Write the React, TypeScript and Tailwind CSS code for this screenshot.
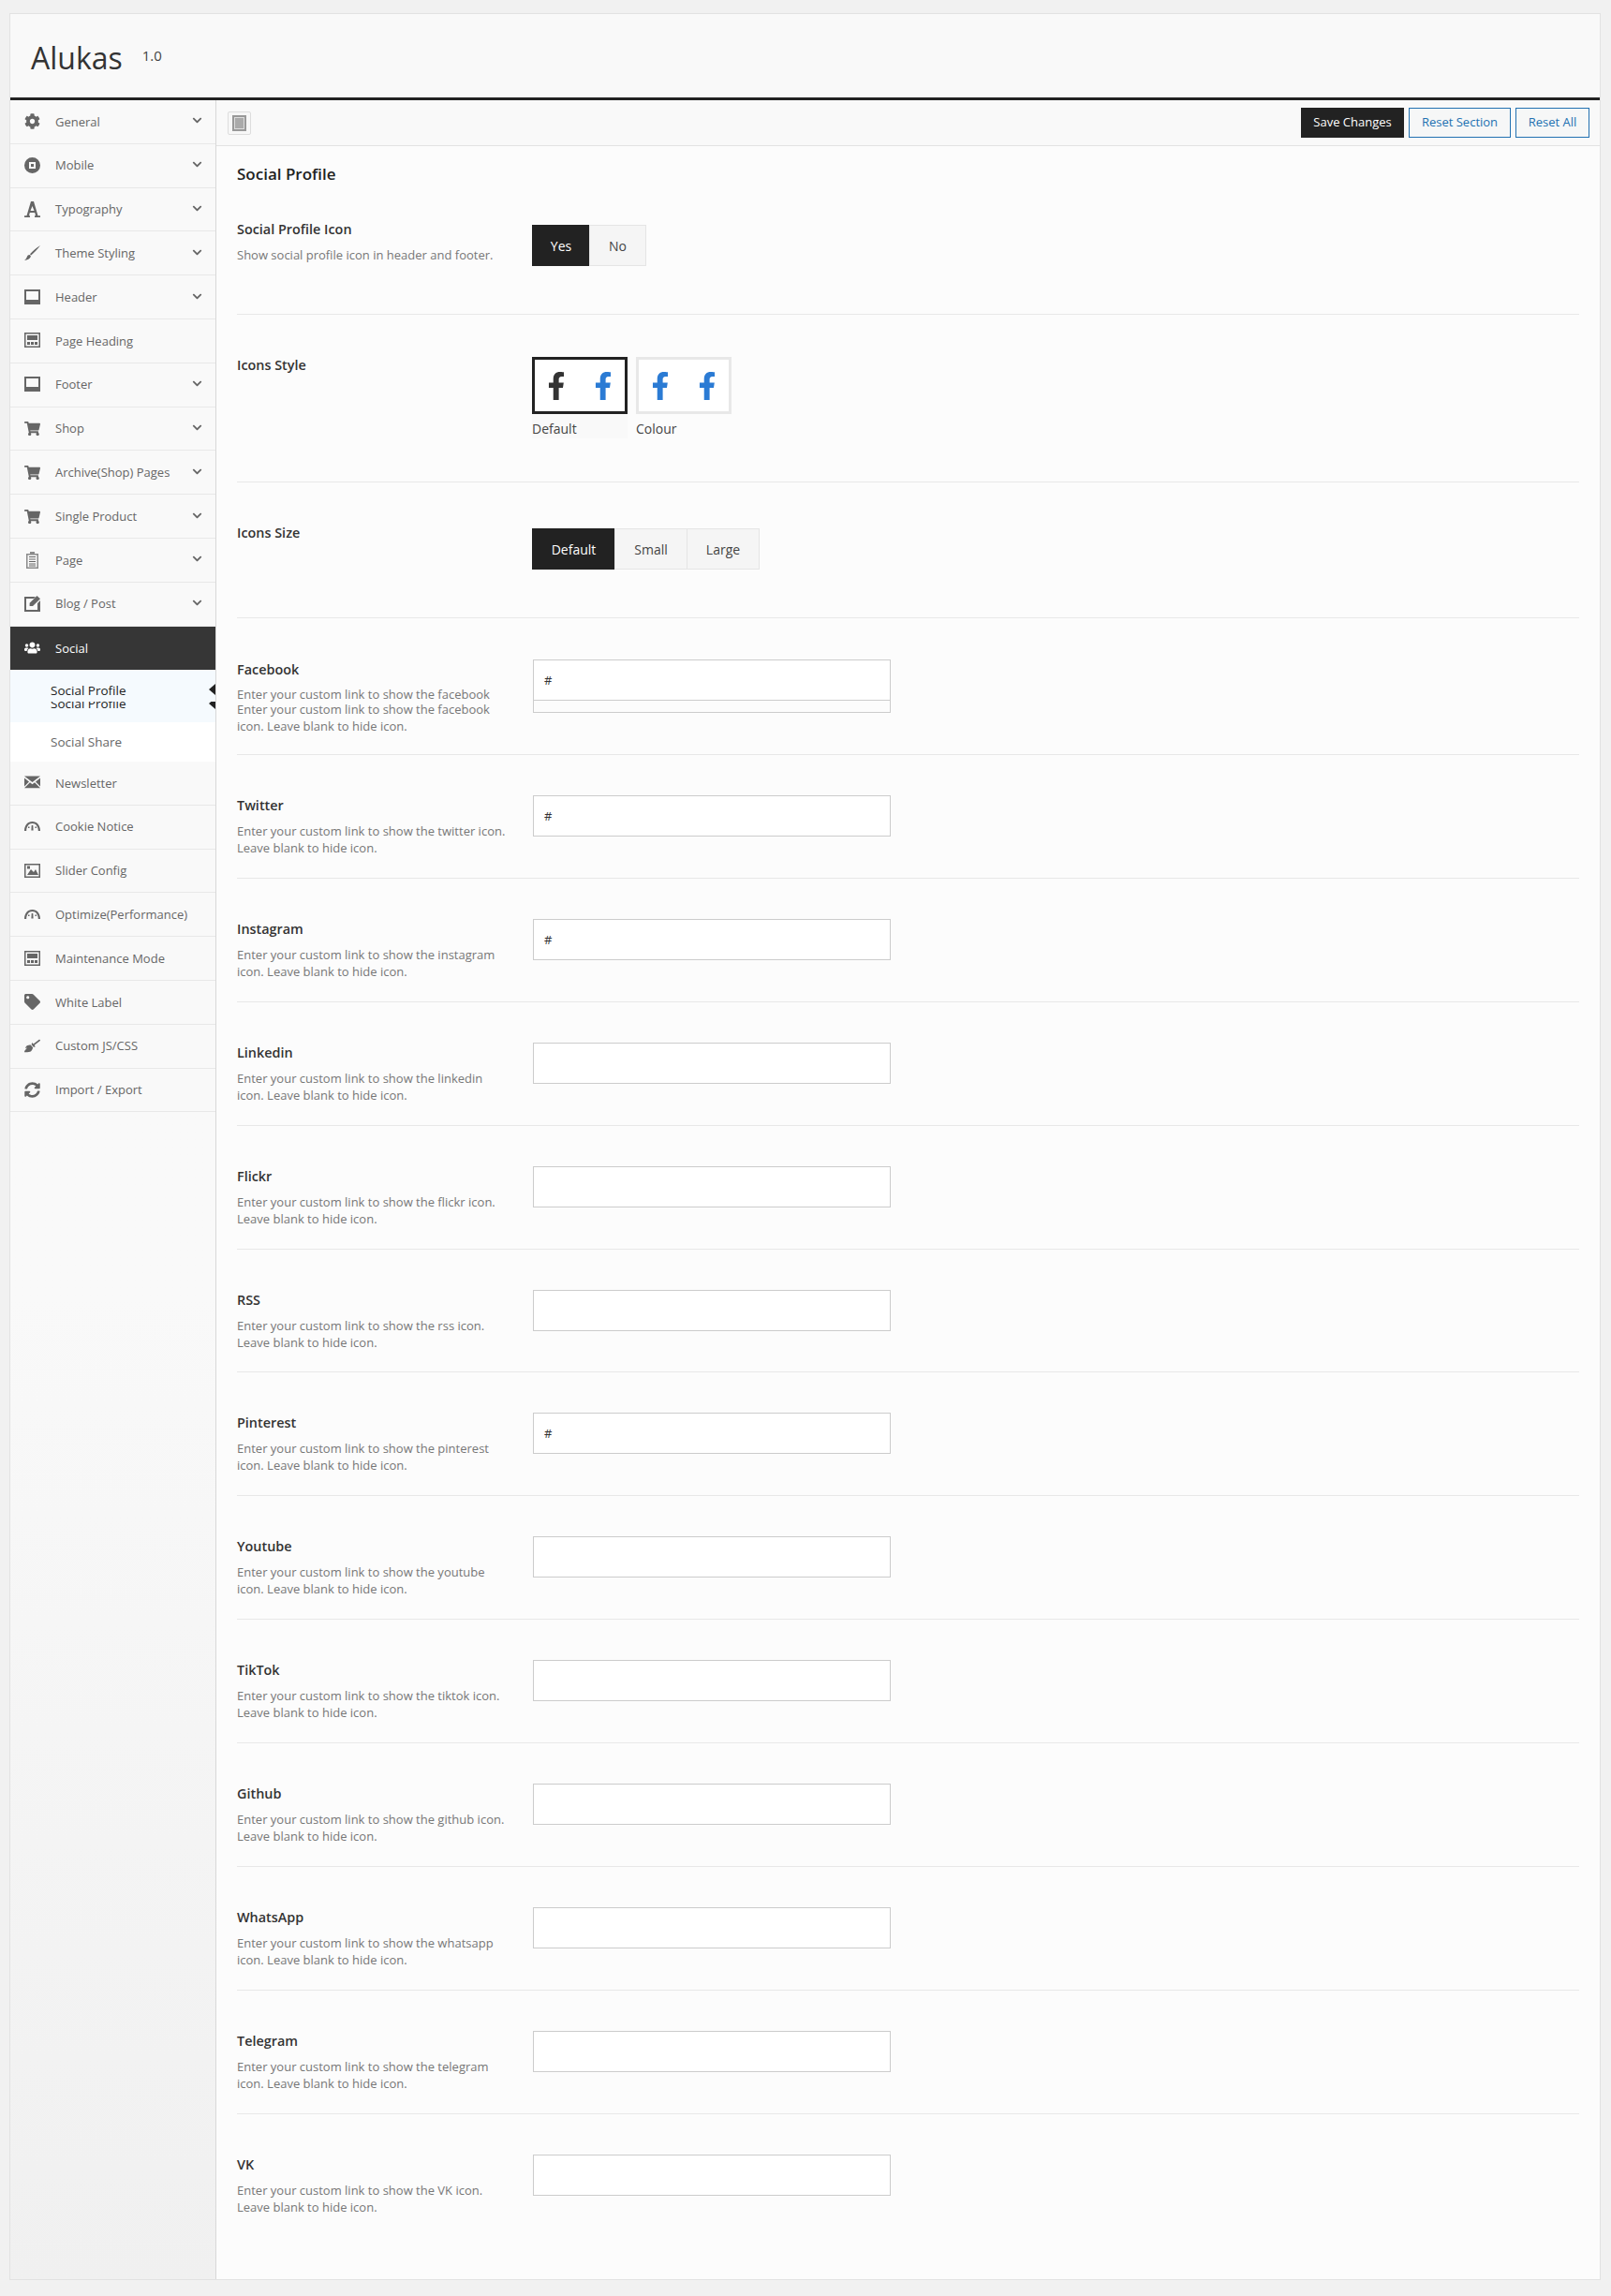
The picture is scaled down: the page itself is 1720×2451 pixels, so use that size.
import type { ReactNode } from 'react';
import {
    FaBroom,
    FaChevronDown,
    FaCog,
    FaFacebookF,
    FaShoppingCart,
    FaSyncAlt,
    FaTag,
    FaUsers,
} from 'react-icons/fa';

const Frame = ({ children }: { children: ReactNode }) => (
    <svg width="17" height="17" viewBox="0 0 17 17" fill="currentColor">
        {children}
    </svg>
);

const BarIcon = () => (
    <Frame>
        <path fillRule="evenodd" d="M0 0h17v16H0zM2 2v9h13V2z" />
    </Frame>
);

const LayoutIcon = () => (
    <Frame>
        <path fillRule="evenodd" d="M0 0h17v16H0zM1.500 1.500v13h14v-13zM3 3h11v5H3zM3 10h3v3H3zM7 10h3v3H7zM11 10h3v3h-3z" />
    </Frame>
);

const GaugeIcon = () => (
    <Frame>
        <path d="M0 13C0 7 3.500 3 8.500 3S17 7 17 13h-2.200C14.800 8.300 12.300 5 8.500 5S2.200 8.300 2.200 13z" />
        <path d="M7.700 7h1.600l.3 5.500H7.400zM4 8.500h1.500v1.500H4zM11.500 8.500H13v1.500h-1.500z" />
    </Frame>
);

const navIcons: Record<string, ReactNode> = {
    cog: <FaCog size={17} />,
    mobile: (
        <Frame>
            <path fillRule="evenodd" d="M8.500 0a8.500 8.500 0 1 1 0 17 8.500 8.500 0 0 1 0-17zM5 5v7h7V5zM7 7h3v3H7z" />
        </Frame>
    ),
    font: (
        <Frame>
            <path fillRule="evenodd" d="M7 0h3l4.500 15.300H17V17h-6v-1.700h1L11.200 12H5.800L5 15.300h1V17H0v-1.700h2.500zM8.500 5L6.500 10h4z" />
        </Frame>
    ),
    brush: (
        <Frame>
            <path d="M17 0C14 4 10.500 8 7.200 10.500L6 9.300C9 6 13 2.500 17 0zM5.300 10c1 0 1.800 1 1.500 2-.6 2.200-3.800 3.600-6.800 4 1.800-1.500 2.400-2.500 2.900-4 .4-1.200 1.300-2 2.400-2z" />
        </Frame>
    ),
    bar: <BarIcon />,
    layout: <LayoutIcon />,
    cart: <FaShoppingCart size={17} />,
    page: (
        <svg width="17" height="18" viewBox="0 0 17 18" fill="none">
            <path fill="currentColor" opacity="0.75" fillRule="evenodd" d="M2 2h4V0h5v2h4v16H2zM3.500 3.500v13h10v-13z" />
            <path stroke="currentColor" strokeWidth="1" d="M5 5.500h7M5 8h7M5 10.500h7M5 13h7M5 15h7" />
        </svg>
    ),
    edit: (
        <Frame>
            <path d="M0 1h12L10 3H2v12h12V8l3-3v12H0z" />
            <path d="M13.500 0L17 3.300 9 11H5.600V7.700z" />
        </Frame>
    ),
    users: <FaUsers size={17} />,
    mail: (
        <Frame>
            <path d="M0 1.500h17L8.500 8zM0 3.500l5 4L0 12.500zM17 3.500v9l-5-5zM6 8.300l2.500 2 2.500-2 6 6H0z" />
        </Frame>
    ),
    gauge: <GaugeIcon />,
    image: (
        <Frame>
            <path fillRule="evenodd" d="M0 1h17v15H0zM1.500 2.500v12h14v-12z" />
            <path d="M3 13l4-6 3 3 2-3 3 6zM3 3.500h3v3H3z" />
        </Frame>
    ),
    tag: <FaTag size={17} />,
    broom: <FaBroom size={17} />,
    sync: <FaSyncAlt size={17} />,
};

const topNav = [
    { label: 'General', icon: 'cog', more: true },
    { label: 'Mobile', icon: 'mobile', more: true },
    { label: 'Typography', icon: 'font', more: true },
    { label: 'Theme Styling', icon: 'brush', more: true },
    { label: 'Header', icon: 'bar', more: true },
    { label: 'Page Heading', icon: 'layout', more: false },
    { label: 'Footer', icon: 'bar', more: true },
    { label: 'Shop', icon: 'cart', more: true },
    { label: 'Archive(Shop) Pages', icon: 'cart', more: true },
    { label: 'Single Product', icon: 'cart', more: true },
    { label: 'Page', icon: 'page', more: true },
    { label: 'Blog / Post', icon: 'edit', more: true },
];

const bottomNav = [
    { label: 'Newsletter', icon: 'mail', more: false },
    { label: 'Cookie Notice', icon: 'gauge', more: false },
    { label: 'Slider Config', icon: 'image', more: false },
    { label: 'Optimize(Performance)', icon: 'gauge', more: false },
    { label: 'Maintenance Mode', icon: 'layout', more: false },
    { label: 'White Label', icon: 'tag', more: false },
    { label: 'Custom JS/CSS', icon: 'broom', more: false },
    { label: 'Import / Export', icon: 'sync', more: false },
];

const links = [
    { name: 'Twitter', first: 'Enter your custom link to show the twitter icon.', second: 'Leave blank to hide icon.', value: '#' },
    { name: 'Instagram', first: 'Enter your custom link to show the instagram', second: 'icon. Leave blank to hide icon.', value: '#' },
    { name: 'Linkedin', first: 'Enter your custom link to show the linkedin', second: 'icon. Leave blank to hide icon.', value: '' },
    { name: 'Flickr', first: 'Enter your custom link to show the flickr icon.', second: 'Leave blank to hide icon.', value: '' },
    { name: 'RSS', first: 'Enter your custom link to show the rss icon.', second: 'Leave blank to hide icon.', value: '' },
    { name: 'Pinterest', first: 'Enter your custom link to show the pinterest', second: 'icon. Leave blank to hide icon.', value: '#' },
    { name: 'Youtube', first: 'Enter your custom link to show the youtube', second: 'icon. Leave blank to hide icon.', value: '' },
    { name: 'TikTok', first: 'Enter your custom link to show the tiktok icon.', second: 'Leave blank to hide icon.', value: '' },
    { name: 'Github', first: 'Enter your custom link to show the github icon.', second: 'Leave blank to hide icon.', value: '' },
    { name: 'WhatsApp', first: 'Enter your custom link to show the whatsapp', second: 'icon. Leave blank to hide icon.', value: '' },
    { name: 'Telegram', first: 'Enter your custom link to show the telegram', second: 'icon. Leave blank to hide icon.', value: '' },
    { name: 'VK', first: 'Enter your custom link to show the VK icon.', second: 'Leave blank to hide icon.', value: '' },
];

const NavItem = ({ label, icon, more }: { label: string; icon: string; more: boolean }) => (
    <div className="flex h-[46.8px] items-center border-b border-[#e8e8e8] bg-[#f9f9f9] pl-[15px] pr-[14px] text-[#666]">
        <span className="flex w-[33px] shrink-0 justify-start">{navIcons[icon]}</span>
        <span className="mt-px flex-1 whitespace-nowrap text-[13px]">{label}</span>
        {more && <FaChevronDown size={11} className="-mt-0.5" />}
    </div>
);

const Segmented = ({ options, widths }: { options: string[]; widths: string[] }) => (
    <div className="flex h-[44px]">
        {options.map((option, index) => (
            <div
                key={option}
                className={
                    index === 0
                        ? `flex items-center justify-center bg-[#222] text-[14px] text-white ${widths[index]}`
                        : `-ml-px flex items-center justify-center border border-[#e5e5e5] bg-[#f5f5f5] text-[14px] text-[#444] ${widths[index]}`
                }
            >
                {option}
            </div>
        ))}
    </div>
);

const StyleOption = ({ label, selected }: { label: string; selected: boolean }) => (
    <div className="w-[102px]">
        <div
            className={`flex h-[61px] items-center justify-between border-[3px] bg-white px-[8px] ${
                selected ? 'border-[#222]' : 'border-[#e8e8e8]'
            }`}
        >
            <FaFacebookF size={30} className={selected ? 'text-[#333]' : 'text-[#2b7bd4]'} />
            <FaFacebookF size={30} className="text-[#2b7bd4]" />
        </div>
        <div className={`h-[26px] pt-[7px] text-[14px] leading-[18px] text-[#444] ${selected ? 'bg-[#f9f9f9]' : ''}`}>{label}</div>
    </div>
);

const TextField = ({ value }: { value: string }) => (
    <input
        type="text"
        defaultValue={value}
        className="relative h-[44px] w-[382px] border border-[#ccc] bg-white px-[11px] text-[13px] text-[#333] outline-none"
    />
);

export default function App() {
    return (
        <div className="min-h-[2451px] bg-[#f1f1f1] pl-[10px] pr-[11px] pt-[14px] font-['Open_Sans','Noto_Sans',sans-serif]">
            <div className="flex h-[2420px] flex-col border border-[#e2e2e2] bg-[#f1f1f1]">
                <header className="flex h-[92px] shrink-0 items-start border-b-[3px] border-[#222] bg-[#f9f9f9] pl-[22px] pt-[22px]">
                    <h1 className="text-[32px] font-medium leading-[50px] text-[#333]">Alukas</h1>
                    <span className="ml-[21px] mt-[12px] text-[15px] leading-[20px] text-[#444]">1.0</span>
                </header>

                <div className="flex min-h-0 flex-1">
                    <aside className="w-[220px] shrink-0 border-r border-[#d8d8d8] bg-linear-to-b from-[#f9f9f9] from-[55%] to-[#f0f0f0]">
                        {topNav.map((item) => (
                            <NavItem key={item.label} {...item} />
                        ))}
                        <div className="flex h-[46.4px] items-center bg-[#363636] pl-[15px] text-white">
                            <span className="flex w-[33px]">{navIcons.users}</span>
                            <span className="mt-px text-[13px]">Social</span>
                        </div>
                        <div className="relative h-[56px] overflow-hidden bg-[#f5fafe] text-[13.5px] font-medium text-[#222]">
                            <div className="absolute left-[43px] top-[27px] leading-[18px]">Social Profile</div>
                            <div className="absolute right-0 top-[30px] h-0 w-0 border-y-[6px] border-r-[7px] border-y-transparent border-r-[#222]" />
                            <div className="absolute inset-x-0 top-0 h-[34px] bg-[#f5fafe]" />
                            <div className="absolute left-[43px] top-[13px] leading-[18px]">Social Profile</div>
                            <div className="absolute right-0 top-[15px] h-0 w-0 border-y-[6px] border-r-[7px] border-y-transparent border-r-[#222]" />
                        </div>
                        <div className="flex h-[42px] items-center bg-white pl-[43px] text-[13.5px] text-[#666]">Social Share</div>
                        {bottomNav.map((item) => (
                            <NavItem key={item.label} {...item} />
                        ))}
                    </aside>

                    <main className="min-w-0 flex-1 bg-[#fcfcfc]">
                        <div className="flex h-[49px] items-center justify-between border-b border-[#e2e2e2] bg-[#f9f9f9] pl-[12px] pr-[11px]">
                            <div className="flex h-[25px] w-[25px] items-center justify-center rounded-[2px] border border-[#ddd] bg-[#f7f7f7]">
                                <div className="flex h-[17px] w-[15px] border-2 border-[#999] bg-[#ddd] p-px">
                                    <div className="flex-1 bg-[#aaa]" />
                                </div>
                            </div>
                            <div className="flex items-center gap-[5px] text-[13px]">
                                <button type="button" className="h-[32px] w-[110px] bg-[#222] text-white">
                                    Save Changes
                                </button>
                                <button type="button" className="h-[32px] w-[109px] border border-[#2271b1] bg-[#f6f7f7] text-[#2271b1]">
                                    Reset Section
                                </button>
                                <button type="button" className="h-[32px] w-[79px] border border-[#2271b1] bg-[#f6f7f7] text-[#2271b1]">
                                    Reset All
                                </button>
                            </div>
                        </div>

                        <div className="px-[22px]">
                            <h2 className="pt-[18px] text-[17px] font-semibold leading-[24px] text-[#222]">Social Profile</h2>

                            <div className="flex h-[138px] border-b border-[#e8e8e8] pt-[42px]">
                                <div className="-mt-[5px] w-[315px] shrink-0">
                                    <div className="text-[14.400px] font-semibold leading-[20px] text-[#333]">Social Profile Icon</div>
                                    <p className="mt-[8px] text-[13px] leading-[18px] text-[#777]">Show social profile icon in header and footer.</p>
                                </div>
                                <Segmented options={['Yes', 'No']} widths={['w-[62px]', 'w-[61px]']} />
                            </div>

                            <div className="flex h-[179px] border-b border-[#e8e8e8] pt-[45px]">
                                <div className="-mt-px w-[315px] shrink-0 text-[14.400px] font-semibold leading-[20px] text-[#333]">Icons Style</div>
                                <div className="flex gap-[9px]">
                                    <StyleOption label="Default" selected />
                                    <StyleOption label="Colour" selected={false} />
                                </div>
                            </div>

                            <div className="flex h-[145px] border-b border-[#e8e8e8] pt-[49px]">
                                <div className="-mt-[5px] w-[315px] shrink-0 text-[14.400px] font-semibold leading-[20px] text-[#333]">Icons Size</div>
                                <Segmented options={['Default', 'Small', 'Large']} widths={['w-[89px]', 'w-[78px]', 'w-[78px]']} />
                            </div>

                            <div className="flex h-[146px] border-b border-[#e8e8e8] pt-[44px]">
                                <div className="w-[316px] shrink-0">
                                    <div className="mt-px text-[14.400px] font-semibold leading-[20px] text-[#333]">Facebook</div>
                                    <p className="mt-[9px] text-[13px] leading-[14px] text-[#777]">Enter your custom link to show the facebook</p>
                                    <p className="text-[13px] leading-[18px] text-[#777]">
                                        Enter your custom link to show the facebook
                                        <br />
                                        icon. Leave blank to hide icon.
                                    </p>
                                </div>
                                <div className="relative h-[57px]">
                                    <div className="absolute inset-x-0 bottom-0 h-[14px] border border-t-0 border-[#ccc]" />
                                    <TextField value="#" />
                                </div>
                            </div>

                            {links.map((link, index) => (
                                <div
                                    key={link.name}
                                    className={`flex pt-[43px] ${index === links.length - 1 ? '' : 'h-[131.9px] border-b border-[#e8e8e8]'}`}
                                >
                                    <div className="w-[316px] shrink-0">
                                        <div className="mt-px text-[14.400px] font-semibold leading-[20px] text-[#333]">{link.name}</div>
                                        <p className="mt-[8px] text-[13px] leading-[18px] text-[#777]">
                                            {link.first}
                                            <br />
                                            {link.second}
                                        </p>
                                    </div>
                                    <TextField value={link.value} />
                                </div>
                            ))}
                        </div>
                    </main>
                </div>
            </div>
        </div>
    );
}
